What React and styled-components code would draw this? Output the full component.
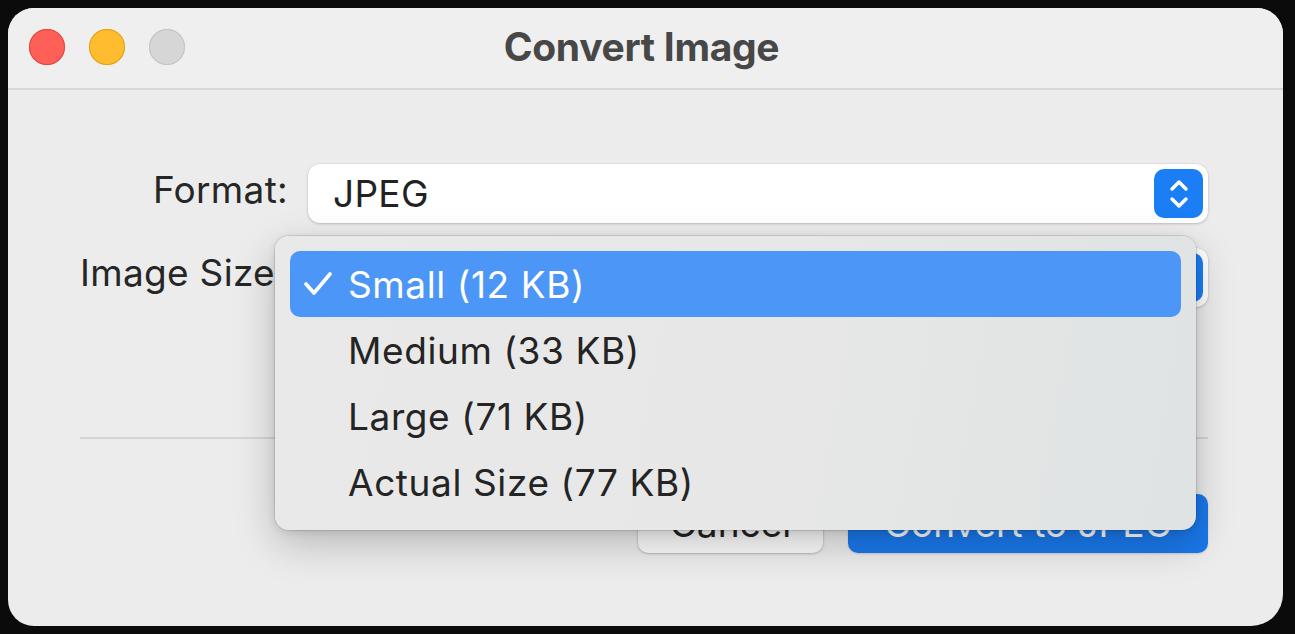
import React from "react";
import styled, { createGlobalStyle } from "styled-components";

const GlobalStyle = createGlobalStyle`
  html, body {
    margin: 0;
    padding: 0;
    background: #0b0b0b;
    font-family: Inter, "Noto Sans", "Liberation Sans", sans-serif;
  }
`;

const Page = styled.div`
  width: 1295px;
  height: 634px;
  padding: 8px 12px 8px 8px;
  box-sizing: border-box;
`;

const Window = styled.div`
  position: relative;
  width: 1275px;
  height: 618px;
  background: #ececec;
  border-radius: 26px 26px 32px 26px;
  overflow: hidden;
  display: flex;
  flex-direction: column;
`;

const TitleBar = styled.div`
  position: relative;
  height: 80px;
  flex: none;
  background: #efefef;
  border-bottom: 2px solid #d6d6d6;
  display: flex;
  align-items: center;
  justify-content: center;
`;

const Lights = styled.div`
  position: absolute;
  left: 21px;
  top: 21px;
  display: flex;
  gap: 24px;
`;

const Light = styled.span`
  width: 36px;
  height: 36px;
  border-radius: 50%;
  background: ${(p) => p.$color};
  box-shadow: inset 0 0 0 1px ${(p) => p.$edge};
`;

const Title = styled.h1`
  margin: -4px 0 0 -8px;
  font-size: 39px;
  font-weight: 700;
  color: #474747;
  letter-spacing: -0.3px;
`;

const Body = styled.div`
  flex: 1;
  padding: 74px 75px 0 72px;
  display: flex;
  flex-direction: column;
`;

const Form = styled.div`
  display: grid;
  grid-template-columns: 208px 900px;
  column-gap: 20px;
  row-gap: 25px;
  align-items: center;
`;

const Label = styled.label`
  justify-self: ${(p) => (p.$left ? "start" : "end")};
  font-size: 37px;
  letter-spacing: 0.3px;
  color: #262626;
  white-space: nowrap;
  margin-top: ${(p) => (p.$left ? "-10px" : "-8px")};
`;

const Popup = styled.div`
  height: 59px;
  box-sizing: border-box;
  background: #ffffff;
  border-radius: 12px;
  box-shadow: 0 1px 3px rgba(0, 0, 0, 0.18), 0 0 0 0.5px rgba(0, 0, 0, 0.06);
  display: flex;
  align-items: center;
  justify-content: space-between;
  padding: 0 5px 0 25px;
`;

const PopupValue = styled.span`
  font-size: 37px;
  letter-spacing: 0.3px;
  color: #222;
`;

const Stepper = styled.span`
  width: 49px;
  height: 49px;
  border-radius: 10px;
  background: #1c7ef5;
  display: flex;
  align-items: center;
  justify-content: center;
`;

const Separator = styled.hr`
  margin: 130px 0 0 0;
  border: none;
  height: 2px;
  background: #d5d5d5;
`;

const Buttons = styled.div`
  margin-top: 55px;
  display: flex;
  justify-content: flex-end;
  gap: 25px;
`;

const Button = styled.button`
  height: 59px;
  width: ${(p) => p.$width}px;
  border: none;
  border-radius: 10px;
  font-family: inherit;
  font-size: 37px;
  background: ${(p) => (p.$primary ? "#1a78ea" : "#fbfbfb")};
  color: ${(p) => (p.$primary ? "#ffffff" : "#222")};
  box-shadow: ${(p) =>
    p.$primary
      ? "0 1px 2px rgba(0,0,0,0.15)"
      : "0 1px 3px rgba(0,0,0,0.2), 0 0 0 0.5px rgba(0,0,0,0.08)"};
`;

const Menu = styled.ul`
  position: absolute;
  left: 267px;
  top: 228px;
  width: 921px;
  height: 294px;
  box-sizing: border-box;
  margin: 0;
  padding: 15px;
  list-style: none;
  background: linear-gradient(100deg, #e9e9e9 0%, #e7e7e7 55%, #dfe3e3 100%);
  border-radius: 14px;
  box-shadow: 0 0 0 1px rgba(0, 0, 0, 0.1), 0 14px 40px rgba(0, 0, 0, 0.22),
    0 2px 8px rgba(0, 0, 0, 0.1);
`;

const Item = styled.li`
  height: 66px;
  display: flex;
  align-items: center;
  gap: 15px;
  padding-left: 13px;
  border-radius: 10px;
  font-size: 37px;
  letter-spacing: 0.6px;
  background: ${(p) => (p.$selected ? "#4c96f7" : "transparent")};
  color: ${(p) => (p.$selected ? "#ffffff" : "#242424")};
`;

const CheckSlot = styled.span`
  width: 30px;
  height: 30px;
  display: flex;
  align-items: center;
  justify-content: center;
`;

const sizes = [
  "Small (12 KB)",
  "Medium (33 KB)",
  "Large (71 KB)",
  "Actual Size (77 KB)",
];

function StepperIcon() {
  return (
    <svg width="24" height="34" viewBox="0 0 24 34" fill="none">
      <path
        d="M5 12 L12 5 L19 12"
        stroke="#fff"
        strokeWidth="3.4"
        strokeLinecap="round"
        strokeLinejoin="round"
      />
      <path
        d="M5 22 L12 29 L19 22"
        stroke="#fff"
        strokeWidth="3.4"
        strokeLinecap="round"
        strokeLinejoin="round"
      />
    </svg>
  );
}

function Check() {
  return (
    <svg width="30" height="24" viewBox="0 0 30 24" fill="none">
      <path
        d="M3 12 L11 21 L27 2"
        stroke="#fff"
        strokeWidth="3.6"
        strokeLinecap="round"
        strokeLinejoin="round"
      />
    </svg>
  );
}

export default function App() {
  return (
    <>
      <GlobalStyle />
      <Page>
        <Window>
          <TitleBar>
            <Lights>
              <Light $color="#fe5f57" $edge="#e2463f" />
              <Light $color="#febc2e" $edge="#e1a116" />
              <Light $color="#d6d6d6" $edge="#c3c3c3" />
            </Lights>
            <Title>Convert Image</Title>
          </TitleBar>
          <Body>
            <Form>
              <Label>Format:</Label>
              <Popup>
                <PopupValue>JPEG</PopupValue>
                <Stepper>
                  <StepperIcon />
                </Stepper>
              </Popup>
              <Label $left>Image Size:</Label>
              <Popup>
                <PopupValue>Small (12 KB)</PopupValue>
                <Stepper>
                  <StepperIcon />
                </Stepper>
              </Popup>
            </Form>
            <Separator />
            <Buttons>
              <Button $width={185}>Cancel</Button>
              <Button $primary $width={360}>
                Convert to JPEG
              </Button>
            </Buttons>
          </Body>
          <Menu>
            {sizes.map((s, i) => (
              <Item key={s} $selected={i === 0}>
                <CheckSlot>{i === 0 && <Check />}</CheckSlot>
                {s}
              </Item>
            ))}
          </Menu>
        </Window>
      </Page>
    </>
  );
}
